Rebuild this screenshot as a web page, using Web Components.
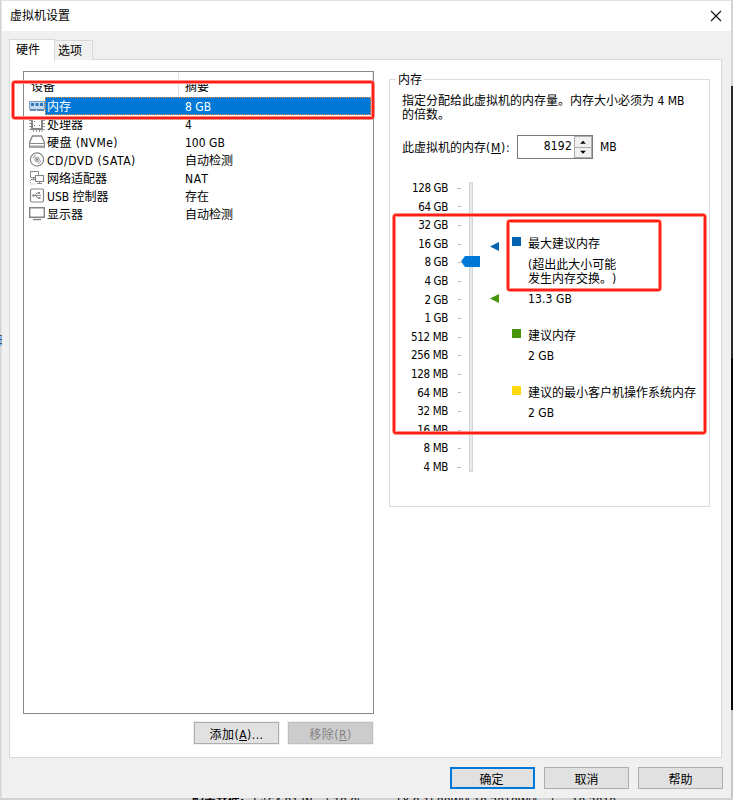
<!DOCTYPE html>
<html lang="zh-CN">
<head>
<meta charset="utf-8">
<title>虚拟机设置</title>
<style>
  html, body { margin: 0; height: 100%; overflow: hidden; }
  body { background: #fff; font: 12px/14px "DejaVu Sans Condensed", "Noto Sans CJK SC", sans-serif; color: #000; text-spacing-trim: space-all; }
</style>
</head>
<body>
<desktop-backdrop>
  <settings-window heading="虚拟机设置">
    <tab-panel>
      <device-list slot="left">
        <device-row icon="memory" summary="8 GB" selected>内存</device-row>
        <device-row icon="cpu" summary="4">处理器</device-row>
        <device-row icon="disk" summary="100 GB" style="--track:.4px">硬盘 (NVMe)</device-row>
        <device-row icon="cd" summary="自动检测" style="--track:.55px">CD/DVD (SATA)</device-row>
        <device-row icon="net" summary="NAT" style="--track-summary:.8px">网络适配器</device-row>
        <device-row icon="usb" summary="存在">USB 控制器</device-row>
        <device-row icon="display" summary="自动检测">显示器</device-row>
      </device-list>
      <push-button slot="actions">添加(<u>A</u>)...</push-button>
      <push-button slot="actions" disabled>移除(<u>R</u>)</push-button>
      <group-box slot="right" label="内存">
        <memory-settings value="8192"></memory-settings>
      </group-box>
    </tab-panel>
    <push-button slot="footer" primary>确定</push-button>
    <push-button slot="footer">取消</push-button>
    <push-button slot="footer">帮助</push-button>
  </settings-window>
</desktop-backdrop>
<red-mark style="left:11px;top:80px;width:364px;height:40px"></red-mark>
<red-mark style="left:392px;top:213px;width:315px;height:222px"></red-mark>
<red-mark style="left:506px;top:219px;width:156px;height:73px"></red-mark>

<script>
class BaseElement extends HTMLElement {
  connectedCallback() {
    this.attachShadow({ mode: 'open' }).innerHTML = this.template;
  }
}

// What shows around the window: left and right slivers and the bottom row
class DesktopBackdrop extends BaseElement {
  get template() {
    return `
    <style>
      :host { display: grid; grid-template: 798px 2px / 2px 729px 2px; width: 733px; height: 800px; overflow: hidden; }
      .left { background: linear-gradient(90deg, #d5d5d5 1px, #e3e3e3 1px); display: flex; flex-direction: column; overflow: hidden; }
      .left i { height: 11px; margin-top: 335px; background: repeating-linear-gradient(#555 0 1px, #8ab8e8 1px 4px); }
      .right { background: linear-gradient(#d4d4d4 86px, #2b2b2b 86px 358px, #060606 358px 710px, #c8c8c8 710px); }
      .bottom { grid-column: 1 / 4; display: flex; background: #d2d2d2; overflow: hidden; white-space: pre; line-height: 12px; }
      .bottom span { margin-top: -2px; }
      .bottom b { margin: -2px 9px 0 192px; }
      .bottom .path { width: 142px; }
    </style>
    <div class="left"><i></i></div>
    <slot></slot>
    <div class="right"></div>
    <div class="bottom"><b>配置文件:</b><span class="path">E:\\64 01 W    \\ 10 0\\</span><span>TX 0 1500W\\" 10 2010W\\"    |     10 2010</span></div>`;
  }
}

class SettingsWindow extends BaseElement {
  get template() {
    return `
    <style>
      :host { display: flex; flex-direction: column; background: #f0f0f0; box-sizing: border-box; border-top: 1px solid #e2e2e2; }
      .title { height: 30px; background: #fff; display: flex; align-items: center; justify-content: space-between; padding: 0 9px 0 8px; }
      main { padding: 7px 9px 0 7px; }
      footer { display: flex; justify-content: flex-end; gap: 9px; padding: 9px 8px 0; }
    </style>
    <div class="title"><span>${this.getAttribute('heading')}</span>
      <svg width="12" height="12" viewBox="0 0 12 12"><path d="M1 1L11 11M11 1L1 11" stroke="#111" stroke-width="1.2"/></svg>
    </div>
    <main><slot></slot></main>
    <footer><slot name="footer"></slot></footer>`;
  }
}

class TabPanel extends BaseElement {
  get template() {
    return `
    <style>
      :host { display: block; }
      nav { display: flex; align-items: flex-end; height: 22px; }
      nav span { box-sizing: border-box; border: 1px solid #d9d9d9; border-bottom: 0; }
      .on { width: 46px; height: 22px; padding: 3px 0 0 6px; background: #fff; margin-bottom: -1px; z-index: 1; }
      .off { width: 38px; height: 20px; padding: 3px 0 0 3px; border-left: 0; background: #f0f0f0; }
      .page { display: flex; box-sizing: border-box; width: 713px; height: 699px; margin-top: -1px; padding: 11px 11px 0 13px; gap: 15px; border: 1px solid #d9d9d9; background: #fff; }
      .side { width: 351px; display: flex; flex-direction: column; }
      .actions { display: flex; justify-content: flex-end; gap: 9px; margin: 8px 1px 0 0; letter-spacing: .5px; }
      nav .on { height: 22px; }
      slot[name=right] { display: block; margin-top: 1px; }
    </style>
    <nav><span class="on">硬件</span><span class="off">选项</span></nav>
    <div class="page">
      <div class="side"><slot name="left"></slot><div class="actions"><slot name="actions"></slot></div></div>
      <slot name="right"></slot>
    </div>`;
  }
}

class DeviceList extends BaseElement {
  get template() {
    return `
    <style>
      :host { display: block; box-sizing: border-box; height: 643px; border: 1px solid #828790; }
      .head { display: grid; grid-template-columns: 155px 194px; height: 25px; line-height: 28px; }
      .head span { box-sizing: border-box; border-right: 1px solid #e3e3e3; margin-top: 1px; padding-left: 7px; height: 24px; }
      .head span + span { padding-left: 6px; }
    </style>
    <div class="head"><span>设备</span><span>摘要</span></div>
    <slot></slot>`;
  }
}

const ICONS = {
  memory: `<path d="M.5 3.500h15v8h-15z" fill="#c4dcf2" stroke="#7da0c0"/><path d="M2 5h3v3H2zM6.500 5h3v3h-3zM11 5h3v3h-3z" fill="#2f78b8"/><path d="M1 11h6v2H1zM8 11h7v2H8z" fill="#6289a8"/>`,
  cpu: `<path d="M4.5 0v3M7.5 0v3M10.5 0v3M4.5 13v3M7.5 13v3M10.5 13v3M13 0v2M13 14v2M0 4.500h3M0 7.500h3M0 10.500h3M13 4.500h3M13 7.500h3M13 10.500h3M0 2.500h2M0 13.500h2M14 2.500h2M14 13.500h2" stroke="#999"/><path d="M3 3h10v10H3z" fill="#fff" stroke="#858585" stroke-width="2"/><path d="M5 5h1v1H5zM10 9h1v1h-1zM5 9h1v1H5z" fill="#777"/>`,
  disk: `<path d="M3.500 2h9l3 6.500v4.500H.5v-4.500z" fill="#fff" stroke="#858585" stroke-width="1.300"/><path d="M1 9.500h14" stroke="#858585"/><path d="M2 11.500h12" stroke="#ccc"/>`,
  cd: `<circle cx="8" cy="7.500" r="6.600" fill="#fff" stroke="#858585" stroke-width="1.200"/><circle cx="8" cy="7.500" r="2.300" fill="#ddd" stroke="#999"/><circle cx="8" cy="7.500" r="1" fill="#777"/><path d="M4 6.500a4 4 0 0 1 3-3M12 8.500a4 4 0 0 1-3 3" fill="none" stroke="#999"/>`,
  net: `<path d="M1.500 1.500h8v6h-8z" fill="#fff" stroke="#858585"/><path d="M4.500 7v3M2 9.500h4" stroke="#858585"/><path d="M6.500 5.500h8v6h-8z" fill="#fff" stroke="#858585" stroke-width="1.200"/><path d="M10.500 12v1M8 13.500h5" stroke="#858585"/><path d="M1.500 10v4h6" fill="none" stroke="#aaa" stroke-dasharray="1 1"/>`,
  usb: `<rect x="1.500" y="1" width="13" height="13" rx="1.500" fill="#fff" stroke="#858585" stroke-width="1.200"/><path d="M3.500 7.500h8.500M6 7.500l2-2.500h2M7 7.500l1.500 2.500H11" fill="none" stroke="#8a8a8a"/><circle cx="4.500" cy="7.500" r="1.300" fill="#8a8a8a"/><path d="M9 4h2v2H9zM9.500 9h2v2h-2z" fill="#8a8a8a"/>`,
  display: `<path d="M.7 1.700h14.600v9.600H.7z" fill="#fff" stroke="#858585" stroke-width="1.400"/><path d="M4 13.500h8" stroke="#858585" stroke-width="1.400"/>`
};

class DeviceRow extends BaseElement {
  get template() {
    return `
    <style>
      :host { display: grid; grid-template-columns: 16px 139px 187px; height: 18px; padding-left: 5px; line-height: 21px; white-space: nowrap; }
      svg { margin-top: 1px; }
      .name { padding-left: 2px; letter-spacing: var(--track, 0); }
      .summary { padding-left: 1px; letter-spacing: var(--track-summary, 0); }
      :host([selected]) .name, :host([selected]) .summary { background: #0078d7; color: #fff; border: 1px dotted #ee8c3c; border-width: 1px 0; line-height: 19px; height: 16px; }
      :host([selected]) .name { border-left-width: 1px; padding-left: 1px; }
      :host([selected]) .summary { border-right-width: 1px; }
    </style>
    <svg width="16" height="16" viewBox="0 0 16 16">${ICONS[this.getAttribute('icon')]}</svg>
    <span class="name"><slot></slot></span>
    <span class="summary">${this.getAttribute('summary')}</span>`;
  }
}

class PushButton extends BaseElement {
  get template() {
    return `
    <style>
      :host { display: block; }
      button { display: block; width: 85px; height: 22px; box-sizing: border-box; padding: 3px 0 0; border: 1px solid #adadad; background: #e1e1e1; box-shadow: 0 0 0 1px #f0f0f0; font: inherit; letter-spacing: inherit; color: #000; }
      :host([primary]) button { border: 2px solid #0078d7; padding-right: 2px; }
      :host([disabled]) button { background: #ccc; border-color: #bfbfbf; color: #838383; }
    </style>
    <button><slot></slot></button>`;
  }
}

class GroupBox extends BaseElement {
  get template() {
    return `
    <style>
      :host { display: block; width: 321px; }
      fieldset { box-sizing: border-box; height: 435px; margin: 0; padding: 0; border: 1px solid #dcdcdc; min-width: 0; }
      legend { margin-left: 6px; padding: 0 2px; height: 14px; line-height: 16px; }
    </style>
    <fieldset><legend>${this.getAttribute('label')}</legend><slot></slot></fieldset>`;
  }
}

class MemorySettings extends BaseElement {
  get template() {
    return `
    <style>
      :host { display: block; padding: 8px 0 0 13px; }
      p { margin: 0 0 0 -1px; white-space: nowrap; }
      .amount { display: flex; align-items: center; height: 24px; margin-top: 13px; }
      .amount label { width: 115px; margin-left: -1px; white-space: nowrap; padding-top: 1px; }
      .amount em { font-style: normal; letter-spacing: .7px; }
      .spin { display: flex; box-sizing: border-box; width: 76px; height: 24px; border: 1px solid #7a7a7a; margin-right: 7px; }
      .spin b { flex: 1; font-weight: normal; text-align: right; padding: 3px 2px 0 0; letter-spacing: .2px; }
      .arrows { display: flex; flex-direction: column; width: 16px; border: 1px solid #adadad; background: #f0f0f0; }
      .arrows svg { flex: 1; min-height: 0; }
      .arrows svg + svg { border-top: 1px solid #adadad; }
      .body { display: flex; margin-top: 20px; }
    </style>
    <p>指定分配给此虚拟机的内存量。内存大小必须为 4 MB<br>的倍数。</p>
    <div class="amount"><label>此虚拟机的内存<em>(<u>M</u>):</em></label>
      <div class="spin"><b>${this.getAttribute('value')}</b>
        <div class="arrows"><svg viewBox="0 0 16 10"><path d="M5 7l3-3 3 3z"/></svg><svg viewBox="0 0 16 10"><path d="M5 3h6l-3 3z"/></svg></div>
      </div><span>MB</span>
    </div>
    <div class="body"><memory-scale></memory-scale><memory-legend></memory-legend></div>`;
  }
}

class MemoryScale extends BaseElement {
  get template() {
    const sizes = ['128 GB', '64 GB', '32 GB', '16 GB', '8 GB', '4 GB', '2 GB', '1 GB',
      '512 MB', '256 MB', '128 MB', '64 MB', '32 MB', '16 MB', '8 MB', '4 MB'];
    return `
    <style>
      :host { display: flex; width: 109px; font-size: 11.5px; letter-spacing: -.35px; }
      ul { list-style: none; margin: 0; padding: 0; width: 58px; }
      li { display: flex; height: 18.6px; line-height: 18.6px; justify-content: flex-end; align-items: center; gap: 10px; white-space: nowrap; }
      li i { width: 3px; height: 1px; background: #bbb; }
      li:first-child i, li:last-child i { width: 4px; margin-left: -1px; }
      svg { flex: none; }
    </style>
    <ul>${sizes.map(s => `<li>${s}<i></i></li>`).join('')}</ul>
    <svg width="51" height="298" viewBox="461 179 51 298">
      <path d="M469.5 182.5h3v289h-3z" fill="#e7eaea" stroke="#d3d3d3"/>
      <path d="M461 261.5l4-5.5h15v11h-15z" fill="#0078d7"/>
      <path d="M490 246.5l9-4.5v9z" fill="#0063b1"/>
      <path d="M490 298.5l9-4.5v9z" fill="#479609"/>
    </svg>`;
  }
}

class MemoryLegend extends BaseElement {
  get template() {
    return `
    <style>
      :host { display: grid; grid-template-columns: 9px auto; column-gap: 7px; align-content: start; padding-top: 57px; white-space: nowrap; }
      i { width: 9px; height: 9px; margin-top: 1px; background: #0063b1; }
      .green { background: #479609; }
      .yellow { background: #ffd90f; }
      span { padding-top: 1px; margin-bottom: -1px; }
      div { grid-column: 2; }
      .note { margin-top: 8px; }
      .max { margin: 6px 0 22px; letter-spacing: .1px; }
      .val { margin: 7px 0 22px; }
    </style>
    <i></i><span>最大建议内存</span>
    <div class="note">(超出此大小可能<br>发生内存交换。)</div>
    <div class="max">13.3 GB</div>
    <i class="green"></i><span>建议内存</span>
    <div class="val">2 GB</div>
    <i class="yellow"></i><span>建议的最小客户机操作系统内存</span>
    <div class="val">2 GB</div>`;
  }
}

// Hand-drawn style highlight frame laid over the window
class RedMark extends BaseElement {
  get template() {
    return `
    <style>
      :host { position: absolute; box-sizing: border-box; border: 1px solid #ff8f88; border-radius: 4px; pointer-events: none; }
      div { box-sizing: border-box; height: 100%; border: 2px solid #ff2015; border-radius: 2px; box-shadow: inset 0 0 0 1px #ff8f88; }
    </style>
    <div></div>`;
  }
}

customElements.define('desktop-backdrop', DesktopBackdrop);
customElements.define('settings-window', SettingsWindow);
customElements.define('tab-panel', TabPanel);
customElements.define('device-list', DeviceList);
customElements.define('device-row', DeviceRow);
customElements.define('push-button', PushButton);
customElements.define('group-box', GroupBox);
customElements.define('memory-settings', MemorySettings);
customElements.define('memory-scale', MemoryScale);
customElements.define('memory-legend', MemoryLegend);
customElements.define('red-mark', RedMark);
</script>
</body>
</html>
